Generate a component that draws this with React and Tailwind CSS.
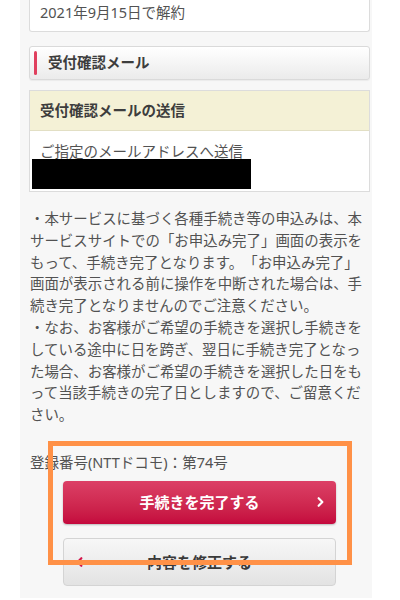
import { ChevronRight, ChevronLeft } from "lucide-react";

const notes = [
  "・本サービスに基づく各種手続き等の申込みは、本",
  "サービスサイトでの「お申込み完了」画面の表示を",
  "もって、手続き完了となります。「お申込み完了」",
  "画面が表示される前に操作を中断された場合は、手",
  "続き完了となりませんのでご注意ください。",
  "・なお、お客様がご希望の手続きを選択し手続きを",
  "している途中に日を跨ぎ、翌日に手続き完了となっ",
  "た場合、お客様がご希望の手続きを選択した日をも",
  "って当該手続きの完了日としますので、ご留意くだ",
  "さい。",
];

export default function App() {
  return (
    <div className="relative w-[400px] h-[600px] bg-white overflow-hidden font-['Noto_Sans','Noto_Sans_CJK_JP',sans-serif] text-[#525252] [text-spacing-trim:space-all]">
      <div className="ml-[20px] w-[352px] h-[598px] bg-[#f7f7f7] pl-[9px] pr-[2px]">
        {/* previous result card, cut at the top */}
        <div className="bg-white border border-t-0 border-[#dcdcdc] rounded-b-[3px] px-[10px] pt-[2px] pb-[9px] text-[14.5px] leading-[20px]">
          2021年9月15日で解約
        </div>

        {/* section heading */}
        <div className="mt-[14px] h-[34px] flex items-center bg-gradient-to-b from-white to-[#ebebeb] border border-[#dadada] rounded-[3px] shadow-[0_1px_1px_rgba(0,0,0,0.05)]">
          <span className="ml-[4px] w-[3px] h-[24px] rounded-full bg-[#e0405e]" />
          <span className="ml-[11px] text-[14.5px] font-bold text-[#3d3d3d]">
            受付確認メール
          </span>
        </div>

        {/* mail card */}
        <div className="mt-[10px] bg-white border border-[#dcdcdc]">
          <div className="h-[40px] flex items-center px-[10px] bg-[#f4f1d6] border-b border-[#e2dfc4] text-[14.5px] font-bold text-[#3d3d3d]">
            受付確認メールの送信
          </div>
          <div className="pt-[12px] pb-[2px]">
            <p className="px-[10px] text-[14.5px] leading-[16px]">
              ご指定のメールアドレスへ送信
            </p>
            <div className="ml-[2px] w-[219px] h-[30px] bg-black" />
          </div>
        </div>

        {/* notes */}
        <p className="mt-[15px] ml-[1px] font-['Noto_Sans_CJK_JP',sans-serif] text-[14.45px] leading-[21.8px] whitespace-nowrap">
          {notes.map((line, i) => (
            <span key={i} className="block">
              {line}
            </span>
          ))}
        </p>

        <p className="mt-[27px] ml-[1px] text-[14.5px] leading-[20px]">
          登録番号(NTTドコモ)：第74号
        </p>

        {/* actions */}
        <div className="mt-[9px] w-[341px] flex flex-col items-center gap-[14px]">
          <button className="relative w-[273px] h-[43px] rounded-[4px] bg-gradient-to-b from-[#dc3f66] to-[#c4073d] shadow-[0_1px_2px_rgba(0,0,0,0.25)] text-white text-[15px] font-bold flex items-center justify-center">
            手続きを完了する
            <ChevronRight
              className="absolute right-[8px] top-1/2 -translate-y-1/2"
              size={15}
              strokeWidth={3.5}
            />
          </button>
          <button className="relative w-[273px] h-[48px] rounded-[4px] border border-[#d4d4d4] bg-gradient-to-b from-[#f7f7f7] to-[#e3e3e3] text-[#3a3a3a] text-[15px] font-bold flex items-center justify-center">
            内容を修正する
            <ChevronLeft
              className="absolute left-[8px] top-1/2 -translate-y-1/2 text-[#d4154a]"
              size={15}
              strokeWidth={3.5}
            />
          </button>
        </div>
      </div>

      {/* orange highlight frame */}
      <div className="absolute left-[48px] top-[441px] w-[304px] h-[124px] border-[5px] border-[#ff9147]" />
    </div>
  );
}
